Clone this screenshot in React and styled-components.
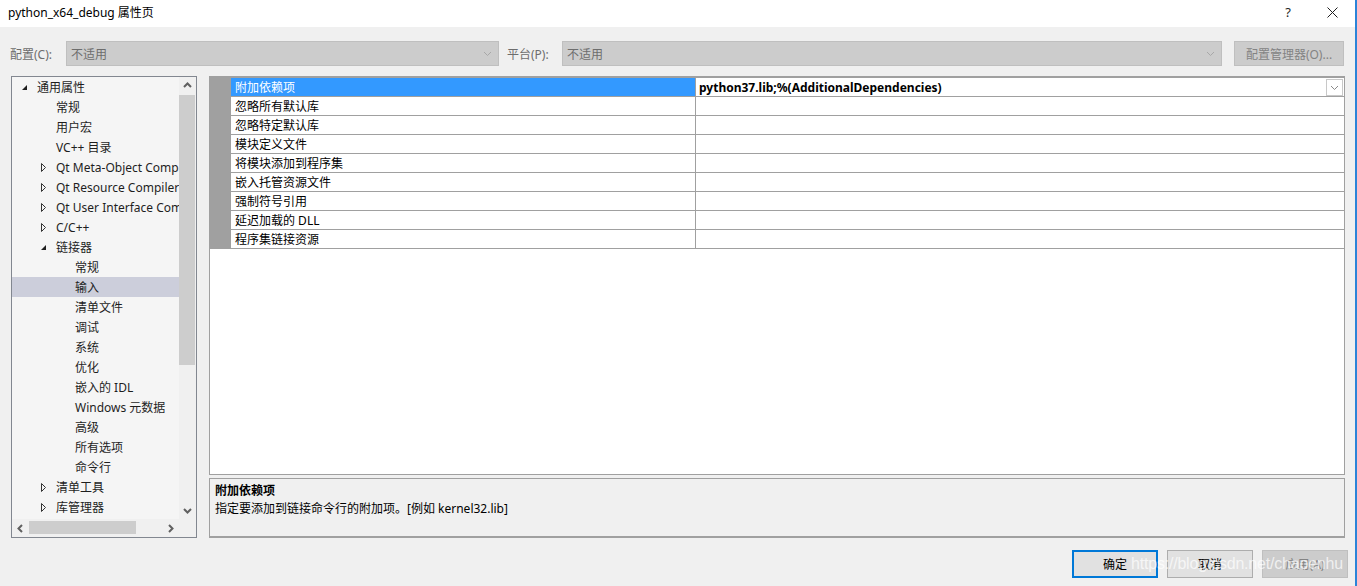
import React from 'react';
import styled, { createGlobalStyle } from 'styled-components';

const GlobalStyle = createGlobalStyle`
  html, body {
    margin: 0;
    padding: 0;
    background: #f0f0f0;
  }
  * {
    box-sizing: border-box;
  }
`;

const UI_FONT = '"Segoe UI", "Noto Sans", "Noto Sans CJK SC", sans-serif';

const treeItems = [
  { label: '通用属性', level: 0, expander: 'open' },
  { label: '常规', level: 1 },
  { label: '用户宏', level: 1 },
  { label: 'VC++ 目录', level: 1 },
  { label: 'Qt Meta-Object Compiler', level: 1, expander: 'closed' },
  { label: 'Qt Resource Compiler', level: 1, expander: 'closed' },
  { label: 'Qt User Interface Compiler', level: 1, expander: 'closed' },
  { label: 'C/C++', level: 1, expander: 'closed' },
  { label: '链接器', level: 1, expander: 'open' },
  { label: '常规', level: 2 },
  { label: '输入', level: 2, selected: true },
  { label: '清单文件', level: 2 },
  { label: '调试', level: 2 },
  { label: '系统', level: 2 },
  { label: '优化', level: 2 },
  { label: '嵌入的 IDL', level: 2 },
  { label: 'Windows 元数据', level: 2 },
  { label: '高级', level: 2 },
  { label: '所有选项', level: 2 },
  { label: '命令行', level: 2 },
  { label: '清单工具', level: 1, expander: 'closed' },
  { label: '库管理器', level: 1, expander: 'closed' },
];

const properties = [
  { name: '附加依赖项', value: 'python37.lib;%(AdditionalDependencies)', selected: true },
  { name: '忽略所有默认库' },
  { name: '忽略特定默认库' },
  { name: '模块定义文件' },
  { name: '将模块添加到程序集' },
  { name: '嵌入托管资源文件' },
  { name: '强制符号引用' },
  { name: '延迟加载的 DLL' },
  { name: '程序集链接资源' },
];

const Chevron = ({ dir = 'down', color = '#9a9a9a', size = 9 }) => {
  const paths = {
    down: 'M1 3 L4.5 6.5 L8 3',
    up: 'M1 6.5 L4.5 3 L8 6.5',
    left: 'M6 1 L2.5 4.5 L6 8',
    right: 'M3 1 L6.5 4.5 L3 8',
  };
  return (
    <svg width={size} height={size} viewBox="0 0 9 9">
      <path d={paths[dir]} fill="none" stroke={color} strokeWidth="1" />
    </svg>
  );
};

const ScrollArrow = ({ dir }) => {
  const paths = {
    up: 'M1 6 L4.5 2.5 L8 6',
    down: 'M1 3 L4.5 6.5 L8 3',
    left: 'M6 1 L2.5 4.5 L6 8',
    right: 'M3 1 L6.5 4.5 L3 8',
  };
  return (
    <svg width="9" height="9" viewBox="0 0 9 9">
      <path d={paths[dir]} fill="none" stroke="#606060" strokeWidth="2" />
    </svg>
  );
};

const Expander = ({ type }) => (
  <ExpanderBox>
    {type === 'open' && (
      <svg width="7" height="7" viewBox="0 0 7 7">
        <path d="M6 1 L6 6 L1 6 Z" fill="#1e1e1e" />
      </svg>
    )}
    {type === 'closed' && (
      <svg width="7" height="9" viewBox="0 0 7 9">
        <path d="M1.5 0.5 L5.5 4.5 L1.5 8.5 Z" fill="none" stroke="#333" strokeWidth="1" />
      </svg>
    )}
  </ExpanderBox>
);

const App = () => (
  <Window>
    <GlobalStyle />
    <TitleBar>
      <Title>python_x64_debug 属性页</Title>
      <TitleButtons>
        <TitleHelp>?</TitleHelp>
        <svg width="11" height="11" viewBox="0 0 11 11">
          <path d="M0.5 0.5 L10.5 10.5 M10.5 0.5 L0.5 10.5" stroke="#1e1e1e" strokeWidth="1" />
        </svg>
      </TitleButtons>
    </TitleBar>

    <Body>
      <ConfigRow>
        <FieldLabel $width={56}>配置(C):</FieldLabel>
        <Combo $width={433}>
          <span>不适用</span>
          <Chevron dir="down" color="#a8a8a8" />
        </Combo>
        <FieldLabel $width={55} $gap={8}>平台(P):</FieldLabel>
        <Combo $grow>
          <span>不适用</span>
          <Chevron dir="down" color="#a8a8a8" />
        </Combo>
        <ManagerButton>配置管理器(O)...</ManagerButton>
      </ConfigRow>

      <Main>
        <TreePanel>
          <TreeList>
            {treeItems.map((item, i) => (
              <TreeRow key={i} $level={item.level} $selected={item.selected}>
                <Expander type={item.expander} />
                <TreeLabel>{item.label}</TreeLabel>
              </TreeRow>
            ))}
          </TreeList>
          <VScroll>
            <ScrollArrowBox>
              <ScrollArrow dir="up" />
            </ScrollArrowBox>
            <VTrack>
              <VThumb />
            </VTrack>
            <ScrollArrowBox>
              <ScrollArrow dir="down" />
            </ScrollArrowBox>
          </VScroll>
          <HScroll>
            <HArrowBox>
              <ScrollArrow dir="left" />
            </HArrowBox>
            <HTrack>
              <HThumb />
            </HTrack>
            <HArrowBox>
              <ScrollArrow dir="right" />
            </HArrowBox>
          </HScroll>
          <ScrollCorner />
        </TreePanel>

        <RightColumn>
          <PropGrid>
            {properties.map((p) => (
              <PropRow key={p.name}>
                <Gutter />
                <PropName $selected={p.selected}>{p.name}</PropName>
                <PropValue>
                  <ValueText>{p.value}</ValueText>
                  {p.selected && (
                    <DropButton>
                      <Chevron dir="down" color="#8a8a8a" />
                    </DropButton>
                  )}
                </PropValue>
              </PropRow>
            ))}
            <GridFiller />
          </PropGrid>
          <DescPanel>
            <DescTitle>附加依赖项</DescTitle>
            <DescText>指定要添加到链接命令行的附加项。[例如 kernel32.lib]</DescText>
          </DescPanel>
        </RightColumn>
      </Main>

      <Footer>
        <DialogButton $variant="default">确定</DialogButton>
        <DialogButton>取消</DialogButton>
        <DialogButton $variant="disabled">应用(A)</DialogButton>
      </Footer>
    </Body>

    <Watermark>https://blog.csdn.net/chaoenhu</Watermark>
  </Window>
);

const Window = styled.div`
  position: relative;
  width: 1357px;
  height: 586px;
  overflow: hidden;
  background: #f0f0f0;
  border-right: 2px solid #2b84d8;
  font-family: ${UI_FONT};
  font-size: 12px;
  color: #000;
  display: flex;
  flex-direction: column;
`;

const TitleBar = styled.div`
  height: 27px;
  background: #fff;
  display: flex;
  align-items: center;
  justify-content: space-between;
  padding: 0 0 0 8px;
  flex-shrink: 0;
`;

const Title = styled.div`
  font-size: 12px;
  color: #000;
  margin-top: -3px;
`;

const TitleButtons = styled.div`
  display: flex;
  align-items: center;
  gap: 36px;
  padding-right: 17px;
  margin-top: -3px;
`;

const TitleHelp = styled.span`
  font-size: 13px;
  color: #1e1e1e;
`;

const Body = styled.div`
  flex: 1;
  display: flex;
  flex-direction: column;
  padding: 0 10px 0 10px;
`;

const ConfigRow = styled.div`
  display: flex;
  align-items: center;
  height: 25px;
  margin-top: 14px;
  margin-right: 1px;
`;

const FieldLabel = styled.div`
  width: ${(p) => p.$width}px;
  margin-left: ${(p) => p.$gap || 0}px;
  color: #6d6d6d;
  flex-shrink: 0;
`;

const Combo = styled.div`
  width: ${(p) => (p.$width ? `${p.$width}px` : 'auto')};
  flex: ${(p) => (p.$grow ? 1 : 'none')};
  height: 25px;
  background: #cccccc;
  border: 1px solid #bfbfbf;
  display: flex;
  align-items: center;
  justify-content: space-between;
  padding: 0 6px 0 4px;
  color: #6d6d6d;
`;

const ManagerButton = styled.div`
  width: 110px;
  height: 25px;
  margin-left: 12px;
  background: #cccccc;
  border: 1px solid #bfbfbf;
  color: #838383;
  display: flex;
  align-items: center;
  justify-content: center;
`;

const Main = styled.div`
  display: flex;
  gap: 12px;
  margin-top: 10px;
  height: 462px;
`;

const TreePanel = styled.div`
  width: 186px;
  margin-left: 1px;
  border: 1px solid #828790;
  background: #f5f5f5;
  display: grid;
  grid-template-columns: 1fr 17px;
  grid-template-rows: 1fr 18px;
  flex-shrink: 0;
`;

const TreeList = styled.div`
  overflow: hidden;
`;

const TreeRow = styled.div`
  height: 20px;
  display: flex;
  align-items: center;
  padding-left: ${(p) => 6 + p.$level * 19}px;
  background: ${(p) => (p.$selected ? '#cccedb' : 'transparent')};
  white-space: nowrap;
`;

const ExpanderBox = styled.span`
  width: 19px;
  height: 20px;
  flex-shrink: 0;
  display: flex;
  align-items: center;
  padding-left: 3px;
`;

const TreeLabel = styled.span`
  color: #1e1e1e;
`;

const VScroll = styled.div`
  background: #f0f0f0;
  display: flex;
  flex-direction: column;
`;

const ScrollArrowBox = styled.div`
  height: 17px;
  display: flex;
  align-items: center;
  justify-content: center;
`;

const VTrack = styled.div`
  flex: 1;
  padding: 1px 1px 0 0;
`;

const VThumb = styled.div`
  height: 270px;
  background: #cdcdcd;
`;

const HScroll = styled.div`
  background: #f0f0f0;
  display: flex;
  align-items: stretch;
`;

const HArrowBox = styled.div`
  width: 17px;
  display: flex;
  align-items: center;
  justify-content: center;
`;

const HTrack = styled.div`
  flex: 1;
  padding: 2px 0 3px 0;
`;

const HThumb = styled.div`
  width: 107px;
  height: 100%;
  background: #cdcdcd;
`;

const ScrollCorner = styled.div`
  background: #f0f0f0;
`;

const RightColumn = styled.div`
  flex: 1;
  display: flex;
  flex-direction: column;
  gap: 3px;
`;

const PropGrid = styled.div`
  height: 399px;
  border: 1px solid #a0a0a0;
  border-top-width: 2px;
  background: #fff;
  display: flex;
  flex-direction: column;
`;

const PropRow = styled.div`
  display: flex;
  height: 19px;
  border-bottom: 1px solid #a0a0a0;
`;

const Gutter = styled.div`
  width: 21px;
  background: #a0a0a0;
  flex-shrink: 0;
`;

const PropName = styled.div`
  width: 465px;
  flex-shrink: 0;
  padding-left: 4px;
  display: flex;
  align-items: center;
  border-right: 1px solid #a0a0a0;
  background: ${(p) => (p.$selected ? '#3399ff' : '#fff')};
  color: ${(p) => (p.$selected ? '#fff' : '#000')};
`;

const PropValue = styled.div`
  flex: 1;
  display: flex;
  align-items: center;
  justify-content: space-between;
  padding-left: 3px;
`;

const ValueText = styled.span`
  font-weight: bold;
`;

const DropButton = styled.div`
  width: 17px;
  height: 17px;
  border: 1px solid #c8c8c8;
  background: #fff;
  display: flex;
  align-items: center;
  justify-content: center;
  margin-right: 1px;
`;

const GridFiller = styled.div`
  flex: 1;
`;

const DescPanel = styled.div`
  height: 60px;
  border: 1px solid #a0a0a0;
  border-bottom-width: 2px;
  background: #f0f0f0;
  padding: 3px 5px;
  line-height: 18px;
`;

const DescTitle = styled.div`
  font-weight: bold;
`;

const DescText = styled.div``;

const Footer = styled.div`
  display: flex;
  justify-content: flex-end;
  gap: 9px;
  margin-top: 12px;
  margin-right: -3px;
`;

const DialogButton = styled.div`
  width: 86px;
  height: 28px;
  display: flex;
  align-items: center;
  justify-content: center;
  background: ${(p) => (p.$variant === 'disabled' ? '#cccccc' : '#e1e1e1')};
  border: ${(p) =>
    p.$variant === 'default'
      ? '2px solid #0078d7'
      : p.$variant === 'disabled'
      ? '1px solid #bfbfbf'
      : '1px solid #adadad'};
  color: ${(p) => (p.$variant === 'disabled' ? '#838383' : '#000')};
`;

const Watermark = styled.div`
  position: absolute;
  left: 1131px;
  top: 555px;
  font-family: "Liberation Sans", Arial, sans-serif;
  font-size: 16px;
  letter-spacing: -0.2px;
  color: rgba(255, 255, 255, 0.72);
  white-space: nowrap;
  pointer-events: none;
`;

export default App;
